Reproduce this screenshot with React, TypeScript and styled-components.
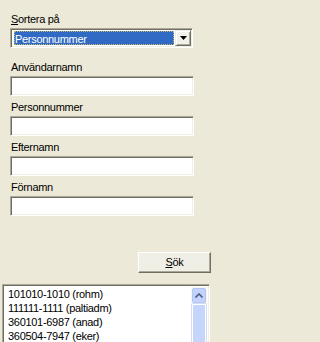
import React from "react";
import styled, { createGlobalStyle } from "styled-components";

const Global = createGlobalStyle`
  html, body {
    margin: 0;
    padding: 0;
    width: 228px;
    height: 342px;
    overflow: hidden;
    background: #ECE9D8;
  }
  body {
    font-family: "Liberation Sans", Arial, sans-serif;
    font-size: 11px;
    letter-spacing: -0.3px;
    color: #000;
    -webkit-font-smoothing: none;
  }
`;

const Page = styled.div`
  width: 228px;
  height: 342px;
  display: flex;
  flex-direction: column;
  overflow: hidden;
`;

const Form = styled.div`
  display: flex;
  flex-direction: column;
  padding: 13px 0 0 10px;
  width: 184px;
`;

const Field = styled.div<{ $gap?: number }>`
  display: flex;
  flex-direction: column;
  gap: 2px;
  margin-bottom: ${(p) => p.$gap ?? 5}px;
`;

const Label = styled.div`
  height: 13px;
  line-height: 13px;
  padding-left: 1px;
  white-space: nowrap;
`;

const U = styled.span`
  text-decoration: underline;
`;

const inset = `
  box-sizing: border-box;
  border: 1px solid;
  border-color: #ACA899 #FFFFFF #FFFFFF #ACA899;
  box-shadow: inset 1px 1px 0 #716F64, inset -1px -1px 0 #F1EFE2;
  background: #fff;
`;

const TextBox = styled.div`
  ${inset}
  height: 20px;
  width: 184px;
`;

const Select = styled.div`
  ${inset}
  height: 20px;
  width: 183px;
  display: flex;
  align-items: center;
  padding: 2px 1px 2px 3px;
  gap: 1px;
`;

const Selected = styled.div`
  flex: 1;
  height: 14px;
  line-height: 14px;
  background: #316AC5;
  color: #fff;
  box-sizing: border-box;
  border: 1px dotted #C9B76A;
  padding-left: 0px;
  white-space: nowrap;
`;

const DropButton = styled.div`
  box-sizing: border-box;
  width: 16px;
  height: 16px;
  background: #F2F1EA;
  border: 1px solid;
  border-color: #F1EFE2 #716F64 #716F64 #F1EFE2;
  box-shadow: inset 1px 1px 0 #fff, inset -1px -1px 0 #ACA899;
  display: flex;
  align-items: center;
  justify-content: center;
`;

const ButtonRow = styled.div`
  display: flex;
  justify-content: flex-end;
  padding: 36px 17px 0 0;
`;

const Button = styled.div`
  box-sizing: border-box;
  width: 73px;
  height: 21px;
  background: #F0EFE6;
  border: 1px solid;
  border-color: #FFFFFF #716F64 #716F64 #FFFFFF;
  box-shadow: inset -1px -1px 0 #ACA899;
  display: flex;
  align-items: center;
  justify-content: center;
  padding-bottom: 1px;
`;

const ListBox = styled.div`
  ${inset}
  margin: 11px 0 0 2px;
  width: 208px;
  height: 80px;
  display: flex;
  padding: 2px;
`;

const Items = styled.div`
  flex: 1;
  display: flex;
  flex-direction: column;
  padding-left: 3px;
`;

const Item = styled.div`
  height: 14px;
  line-height: 14px;
  white-space: nowrap;
`;

const ScrollBar = styled.div`
  width: 16px;
  display: flex;
  flex-direction: column;
  background: #F7F6F1;
  padding-top: 1px;
`;

const ArrowBtn = styled.div`
  box-sizing: border-box;
  height: 15px;
  margin: 0 1px;
  background: #C3D3FD;
  border: 1px solid #B2C5F3;
  border-radius: 2px;
  display: flex;
  align-items: center;
  justify-content: center;
`;

const Thumb = styled.div`
  flex: 1;
  box-sizing: border-box;
  margin: 1px 1px 0 1px;
  background: #C5D5FC;
  border: 1px solid #FFFFFF;
  box-shadow: 0 0 0 0.5px #B4C6F2;
`;

const items = [
  "101010-1010 (rohm)",
  "111111-1111 (paltiadm)",
  "360101-6987 (anad)",
  "360504-7947 (eker)",
  "361017-8888 (elle)",
];

export default function App() {
  return (
    <Page>
      <Global />
      <Form>
        <Field $gap={13}>
          <Label>
            <U>S</U>ortera på
          </Label>
          <Select>
            <Selected>Personnummer</Selected>
            <DropButton>
              <svg width="7" height="4" viewBox="0 0 7 4">
                <path d="M0 0H7L3.5 4Z" fill="#000" />
              </svg>
            </DropButton>
          </Select>
        </Field>
        <Field>
          <Label>Användarnamn</Label>
          <TextBox />
        </Field>
        <Field>
          <Label>Personnummer</Label>
          <TextBox />
        </Field>
        <Field>
          <Label>Efternamn</Label>
          <TextBox />
        </Field>
        <Field $gap={0}>
          <Label>Förnamn</Label>
          <TextBox />
        </Field>
      </Form>
      <ButtonRow>
        <Button>
          <span>
            <U>S</U>ök
          </span>
        </Button>
      </ButtonRow>
      <ListBox>
        <Items>
          {items.map((t) => (
            <Item key={t}>{t}</Item>
          ))}
        </Items>
        <ScrollBar>
          <ArrowBtn>
            <svg width="8" height="5" viewBox="0 0 8 5">
              <path d="M0.5 4.5L4 1L7.5 4.5" fill="none" stroke="#4D6185" strokeWidth="1.6" />
            </svg>
          </ArrowBtn>
          <Thumb />
        </ScrollBar>
      </ListBox>
    </Page>
  );
}
